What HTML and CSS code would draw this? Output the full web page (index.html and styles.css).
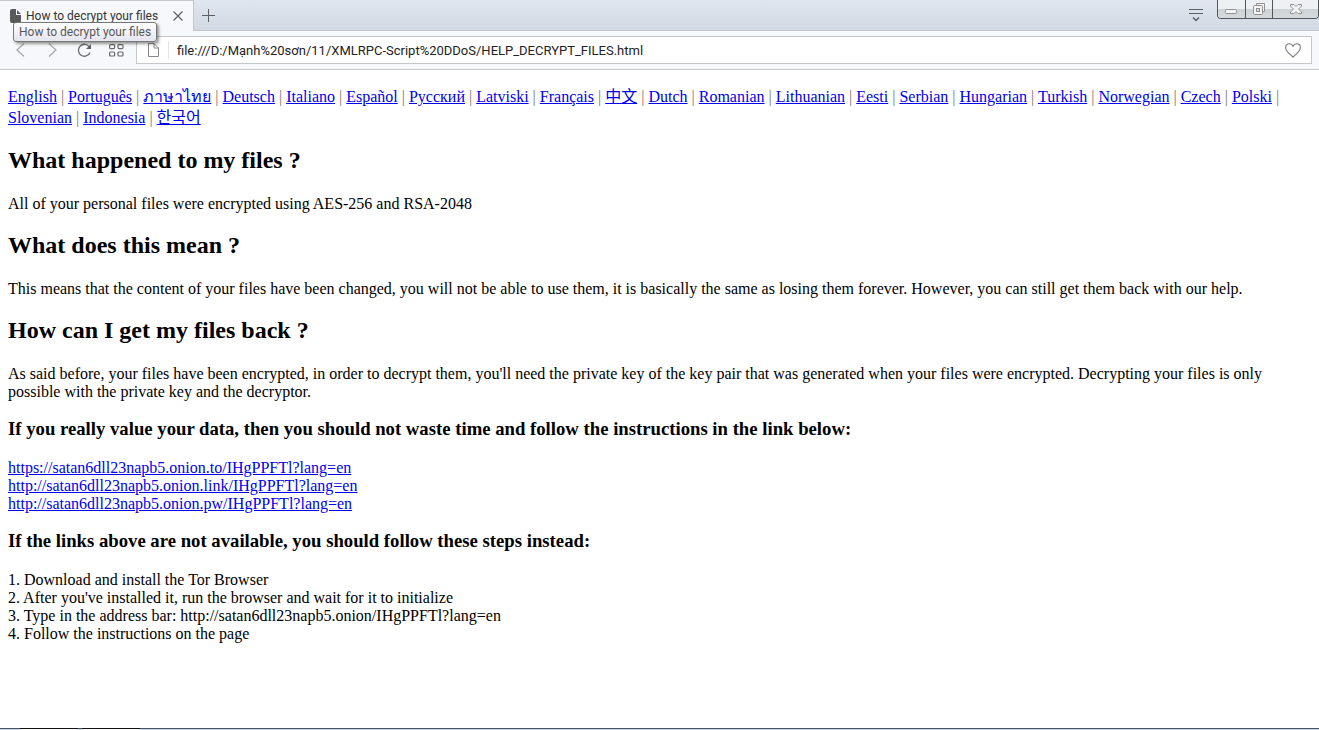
FILE: index.html
```html
<!DOCTYPE html>
<html lang="en">
<head>
    <meta charset="UTF-8">
    <meta name="viewport" content="width=device-width, initial-scale=1.0">
    <title>How to decrypt your files</title>
    <link rel="stylesheet" href="styles.css">
</head>
<body>
    <header class="browser">
        <div class="tab-strip">
            <div class="tab">
                <svg class="tab-icon" width="12" height="14" viewBox="0 0 12 14"><path d="M0 2Q0 0 2 0H6V6H11V12Q11 14 9 14H2Q0 14 0 12ZM7 1 11 5H7Z" fill="#58595b"/></svg>
                <span class="tab-title">How to decrypt your files</span>
                <button class="icon-btn" aria-label="Close tab">
                    <svg width="10" height="10" viewBox="0 0 10 10"><path d="M0.5 0.5 9.5 9.5M9.5 0.5 0.5 9.5" stroke="#5c5f63" stroke-width="1.2"/></svg>
                </button>
                <div class="tooltip">How to decrypt your files</div>
            </div>
            <button class="icon-btn new-tab" aria-label="New tab">
                <svg width="13" height="13" viewBox="0 0 13 13"><path d="M6.5 0V13M0 6.5H13" stroke="#5c5f63"/></svg>
            </button>
            <button class="icon-btn tab-menu" aria-label="Tab menu">
                <svg width="14" height="13" viewBox="0 0 14 13"><path d="M0 .5H14M0 4.5H14" stroke="#5c5f63"/><path d="M4 8.500 7 11.500 10 8.500" fill="none" stroke="#5c5f63" stroke-width="1.500"/></svg>
            </button>
            <div class="window-buttons">
                <button class="win-btn" aria-label="Minimize">
                    <svg width="13" height="14" viewBox="0 0 13 14"><rect x=".5" y="7.500" width="11" height="4" rx="1" fill="#f4f4f4" stroke="#8e9092"/></svg>
                </button>
                <button class="win-btn" aria-label="Restore">
                    <svg width="13" height="14" viewBox="0 0 13 14"><path d="M3.500 3V1.500H11.500V9.500H10" fill="#f4f4f4" stroke="#8e9092"/><rect x=".5" y="3.500" width="9" height="9" rx="1" fill="#f4f4f4" stroke="#8e9092"/><rect x="3.500" y="6.500" width="3" height="3" fill="#dcdfe1" stroke="#8e9092"/></svg>
                </button>
                <button class="win-btn win-close" aria-label="Close window">
                    <svg width="12" height="14" viewBox="0 0 12 14"><path d="M.5 2.500H4L6 4.500 8 2.500H11.500V4L8.500 7 11.500 10V11.500H8L6 9.500 4 11.500H.5V10L3.500 7 .5 4Z" fill="#f4f4f4" stroke="#8e9092"/></svg>
                </button>
            </div>
        </div>
        <div class="toolbar">
            <button class="icon-btn tool-btn" aria-label="Back">
                <svg width="9" height="14" viewBox="0 0 9 14"><path d="M8 0.500 1 7 8 13.500" fill="none" stroke="#a5a7aa" stroke-width="1.300"/></svg>
            </button>
            <button class="icon-btn tool-btn" aria-label="Forward">
                <svg width="9" height="14" viewBox="0 0 9 14"><path d="M1 0.500 8 7 1 13.500" fill="none" stroke="#a5a7aa" stroke-width="1.300"/></svg>
            </button>
            <button class="icon-btn tool-btn" aria-label="Reload">
                <svg width="15" height="15" viewBox="0 0 15 15"><path d="M12.500 4A6 6 0 1 0 13 9.500" fill="none" stroke="#66696c" stroke-width="1.300"/><path d="M14 1V6H9Z" fill="#5c5f63"/></svg>
            </button>
            <button class="icon-btn tool-btn" aria-label="Speed dial">
                <svg width="15" height="13" viewBox="0 0 15 13"><g fill="none" stroke="#66696c" stroke-width="1.200"><rect x=".6" y=".6" width="5" height="4" rx="1"/><rect x="9" y=".6" width="5" height="4" rx="1"/><rect x=".6" y="8" width="5" height="4" rx="1"/><rect x="9" y="8" width="5" height="4" rx="1"/></g></svg>
            </button>
            <div class="address-bar">
                <span class="page-badge">
                    <svg width="11" height="14" viewBox="0 0 11 14"><path d="M.5 .5H6L10.500 5V13.500H.5ZM6 .5V5H10.500" fill="none" stroke="#85878a"/></svg>
                </span>
                <input type="text" aria-label="Address" value="file:///D:/Mạnh%20sơn/11/XMLRPC-Script%20DDoS/HELP_DECRYPT_FILES.html">
                <button class="icon-btn" aria-label="Bookmark">
                    <svg width="16" height="15" viewBox="0 0 16 15"><path d="M8 14C6 12 1 9 .7 5 .4 2 2.500 .7 4.300 .7 6 .7 7.300 1.700 8 3.200 8.700 1.700 10 .7 11.700 .7 13.500 .7 15.600 2 15.300 5 15 9 10 12 8 14Z" fill="none" stroke="#77797c" stroke-width="1.100"/></svg>
                </button>
            </div>
        </div>
    </header>

    <main class="page">
        <nav class="languages">
            <a href="#">English</a> |
            <a href="#">Português</a> |
            <a href="#" lang="th">ภาษาไทย</a> |
            <a href="#">Deutsch</a> |
            <a href="#">Italiano</a> |
            <a href="#">Español</a> |
            <a href="#">Русский</a> |
            <a href="#">Latviski</a> |
            <a href="#">Français</a> |
            <a href="#" lang="zh">中文</a> |
            <a href="#">Dutch</a> |
            <a href="#">Romanian</a> |
            <a href="#">Lithuanian</a> |
            <a href="#">Eesti</a> |
            <a href="#">Serbian</a> |
            <a href="#">Hungarian</a> |
            <a href="#">Turkish</a> |
            <a href="#">Norwegian</a> |
            <a href="#">Czech</a> |
            <a href="#">Polski</a> |
            <a href="#">Slovenian</a> |
            <a href="#">Indonesia</a> |
            <a href="#" lang="ko">한국어</a>
        </nav>

        <h2>What happened to my files ?</h2>
        <p>All of your personal files were encrypted using AES-256 and RSA-2048</p>

        <h2>What does this mean ?</h2>
        <p>This means that the content of your files have been changed, you will not be able to use them, it is basically the same as losing them forever. However, you can still get them back with our help.</p>

        <h2>How can I get my files back ?</h2>
        <p>As said before, your files have been encrypted, in order to decrypt them, you'll need the private key of the key pair that was generated when your files were encrypted. Decrypting your files is only possible with the private key and the decryptor.</p>

        <h3>If you really value your data, then you should not waste time and follow the instructions in the link below:</h3>
        <a href="#">https://satan6dll23napb5.onion.to/IHgPPFTl?lang=en</a><br>
        <a href="#">http://satan6dll23napb5.onion.link/IHgPPFTl?lang=en</a><br>
        <a href="#">http://satan6dll23napb5.onion.pw/IHgPPFTl?lang=en</a>

        <h3>If the links above are not available, you should follow these steps instead:</h3>
        <p>
            1. Download and install the Tor Browser<br>
            2. After you've installed it, run the browser and wait for it to initialize<br>
            3. Type in the address bar: http://satan6dll23napb5.onion/IHgPPFTl?lang=en<br>
            4. Follow the instructions on the page
        </p>
    </main>

    <footer class="taskbar">
        <span class="task"></span>
        <span class="task"></span>
    </footer>
</body>
</html>
```
FILE: styles.css
```css
body {
    display: flex;
    flex-direction: column;
    min-height: 100vh;
    margin: 0;
    background: #fff;
    color: #000;
    font-family: "Liberation Serif", "Noto Sans CJK SC", serif;
    font-size: 16px;
    line-height: 18px;
}

button {
    padding: 0;
    border: none;
    background: none;
}

svg {
    display: block;
}

/* Browser window */
.browser {
    font-family: Roboto, "Open Sans", sans-serif;
    font-size: 12px;
    line-height: 16px;
    color: #333;
}

.tab-strip {
    display: flex;
    height: 30px;
    background: linear-gradient(#dfe6ef, #d2d9e2);
    border-bottom: 1px solid #c3c6ca;
}

.tab {
    position: relative;
    display: flex;
    align-items: center;
    box-sizing: border-box;
    width: 194px;
    height: 31px;
    padding: 0 10px;
    gap: 4px;
    background: #f7f8fb;
    border-top: 1px solid #c3c6ca;
    border-right: 1px solid #c3c6ca;
}

.tab-title {
    flex: 1;
    white-space: nowrap;
}

.tooltip {
    position: absolute;
    top: 21px;
    left: 13px;
    z-index: 1;
    box-sizing: border-box;
    height: 20px;
    padding: 0 5px;
    border: 1px solid #767676;
    border-radius: 3px;
    background: linear-gradient(#fff, #e4e5f0);
    box-shadow: 2px 2px 3px rgba(0, 0, 0, 0.4);
    color: #575757;
    line-height: 18px;
    white-space: nowrap;
}

.new-tab {
    margin-left: 8px;
}

.tab-menu {
    margin-left: auto;
    margin-right: 14px;
}

.window-buttons {
    display: flex;
    height: 18px;
    border: 1px solid #50565c;
    border-top: none;
    border-radius: 0 0 4px 4px;
    overflow: hidden;
}

.win-btn {
    display: flex;
    align-items: center;
    justify-content: center;
    width: 27px;
    background: linear-gradient(#eef1f3 50%, #cdd2d5 50%, #d6dadd);
}

.win-btn + .win-btn {
    border-left: 1px solid #50565c;
}

.win-btn.win-close {
    width: 46px;
}

.toolbar {
    display: flex;
    align-items: center;
    height: 38px;
    padding: 0 7px 0 4px;
    background: #f7f8fb;
    border-bottom: 1px solid #c3c6ca;
}

.tool-btn {
    display: flex;
    justify-content: center;
    width: 32px;
}

.address-bar {
    display: flex;
    flex: 1;
    align-items: center;
    height: 26px;
    margin-left: 4px;
    padding-right: 10px;
    border: 1px solid #c3c6ca;
    background: #fff;
}

.page-badge {
    padding: 2px 9px 2px 11px;
    border-right: 1px solid #e2e4e6;
}

.address-bar input {
    flex: 1;
    padding: 0 8px;
    border: none;
    outline: none;
    color: #222;
    font-family: Roboto, "Open Sans", sans-serif;
    font-size: 13px;
}

/* Page */
.page {
    flex: 1;
    padding: 16px 8px;
}

.languages {
    color: #777;
    line-height: 21px;
}

a {
    color: #0000ee;
    text-decoration: underline;
}

h2 {
    margin: 19px 0 21px;
    font-size: 24px;
    line-height: 27px;
}

h3 {
    margin: 17px 0 20px;
    line-height: 21px;
}

p {
    margin: 0;
}

/* Top edge of the taskbar */
.taskbar {
    display: flex;
    gap: 4px;
    height: 1px;
    padding-left: 20px;
    border-top: 1px solid #485563;
    background: #c6d3e2;
}

.task {
    width: 58px;
    height: 1px;
    background: #fff;
    box-shadow: 0 -1px #111;
}
```
